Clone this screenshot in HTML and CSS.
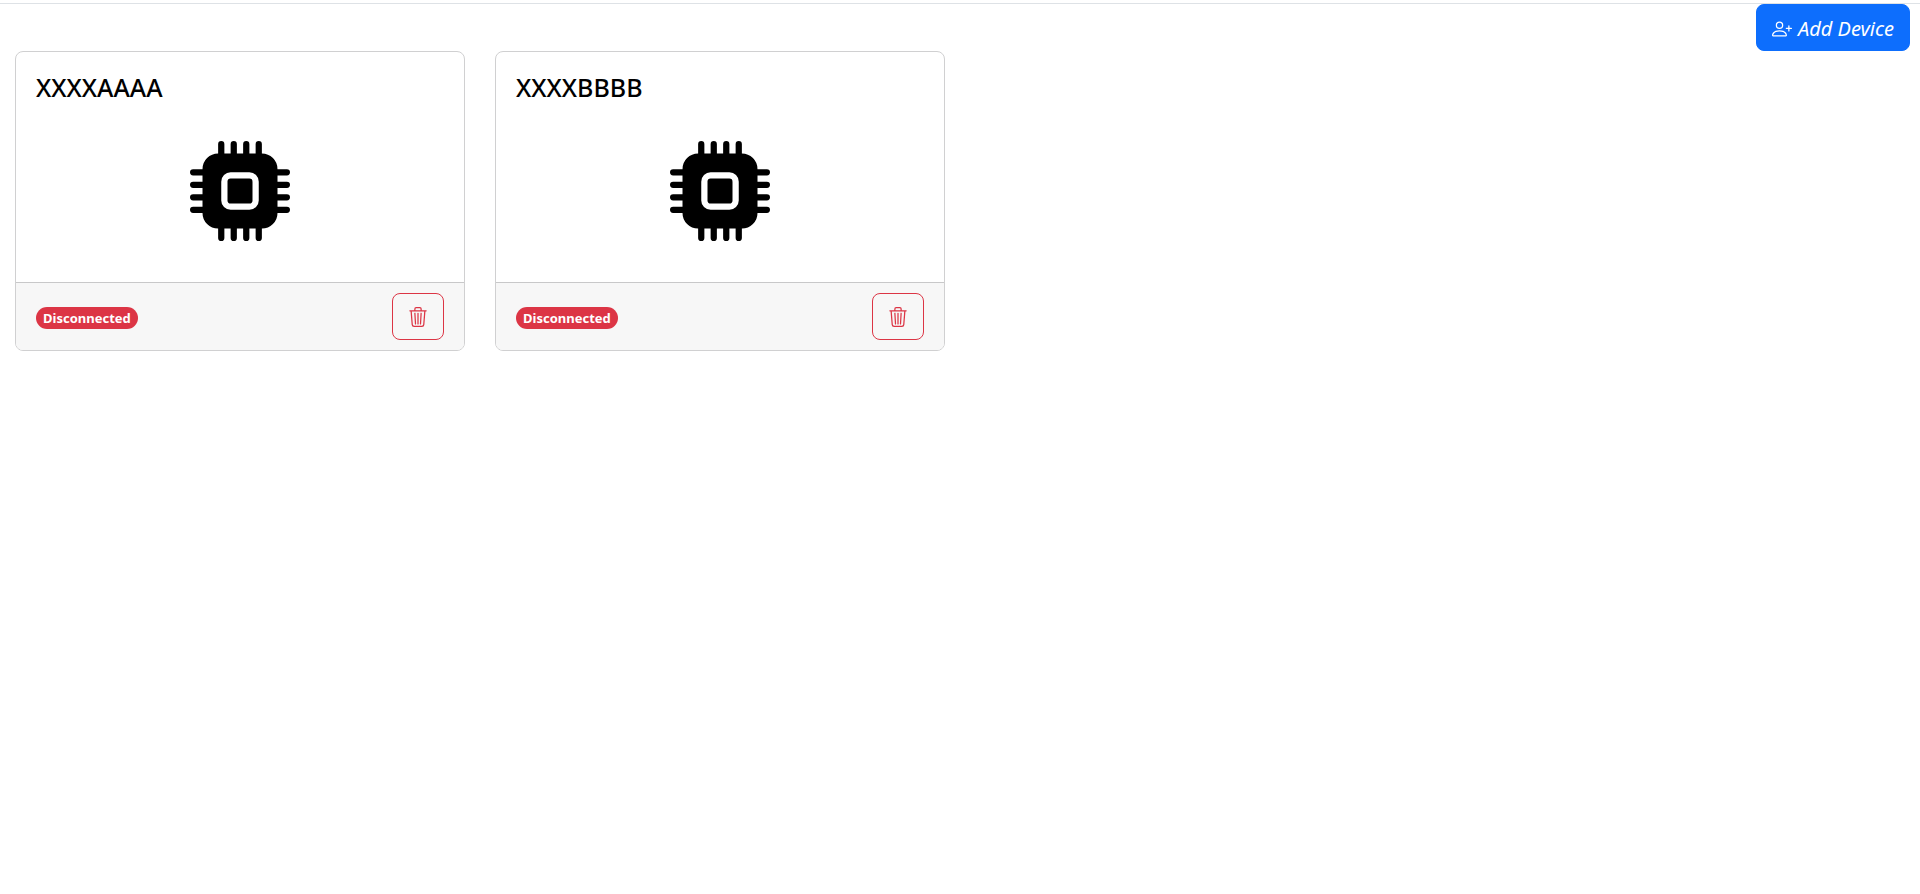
FILE: index.html
```html
<!DOCTYPE html>
<html lang="en">
<head>
<meta charset="utf-8">
<meta name="viewport" content="width=device-width, initial-scale=1">
<title>Devices</title>
<link rel="stylesheet" href="styles.css">
</head>
<body>
<svg class="sprite" aria-hidden="true">
  <symbol id="cpu" viewBox="0 0 16 16"><path d="M6.5 6a.5.5 0 0 0-.5.5v3a.5.5 0 0 0 .5.5h3a.5.5 0 0 0 .5-.5v-3a.5.5 0 0 0-.5-.5z"/><path d="M5.5.5a.5.5 0 0 0-1 0V2A2.5 2.5 0 0 0 2 4.500H.5a.5.5 0 0 0 0 1H2v1H.5a.5.5 0 0 0 0 1H2v1H.5a.5.5 0 0 0 0 1H2v1H.5a.5.5 0 0 0 0 1H2A2.500 2.500 0 0 0 4.500 14v1.500a.5.5 0 0 0 1 0V14h1v1.500a.5.5 0 0 0 1 0V14h1v1.500a.5.5 0 0 0 1 0V14h1v1.500a.5.5 0 0 0 1 0V14a2.500 2.500 0 0 0 2.500-2.500h1.500a.5.5 0 0 0 0-1H14v-1h1.500a.5.5 0 0 0 0-1H14v-1h1.500a.5.5 0 0 0 0-1H14v-1h1.500a.5.5 0 0 0 0-1H14A2.500 2.500 0 0 0 11.500 2V.5a.5.5 0 0 0-1 0V2h-1V.5a.5.5 0 0 0-1 0V2h-1V.5a.5.5 0 0 0-1 0V2h-1zm1 4.500h3A1.500 1.500 0 0 1 11 6.500v3A1.500 1.500 0 0 1 9.500 11h-3A1.500 1.500 0 0 1 5 9.500v-3A1.500 1.500 0 0 1 6.500 5"/></symbol>
  <symbol id="trash" viewBox="0 0 16 16"><path d="M6.5 1h3a.5.5 0 0 1 .5.5v1H6v-1a.5.5 0 0 1 .5-.5M11 2.500v-1A1.500 1.500 0 0 0 9.500 0h-3A1.500 1.500 0 0 0 5 1.500v1H1.500a.5.5 0 0 0 0 1h.538l.853 10.660A2 2 0 0 0 4.885 16h6.230a2 2 0 0 0 1.994-1.840l.853-10.660h.538a.5.5 0 0 0 0-1zm1.958 1-.846 10.580a1 1 0 0 1-.997.920h-6.230a1 1 0 0 1-.997-.920L3.042 3.500zm-7.487 1a.5.5 0 0 1 .528.470l.5 8.500a.5.5 0 0 1-.998.060L5 5.030a.5.5 0 0 1 .470-.530m5.058 0a.5.5 0 0 1 .470.530l-.5 8.500a.5.5 0 1 1-.998-.060l.5-8.500a.5.5 0 0 1 .528-.470M8 4.500a.5.5 0 0 1 .5.5v8.500a.5.5 0 0 1-1 0V5a.5.5 0 0 1 .5-.5"/></symbol>
  <symbol id="person-plus" viewBox="0 0 16 16"><path d="M6 8a3 3 0 1 0 0-6 3 3 0 0 0 0 6m2-3a2 2 0 1 1-4 0 2 2 0 0 1 4 0m4 8c0 1-1 1-1 1H1s-1 0-1-1 1-4 6-4 6 3 6 4m-1-.004c-.001-.246-.154-.986-.832-1.664C9.516 10.680 8.289 10 6 10s-3.516.680-4.168 1.332c-.678.678-.830 1.418-.832 1.664z"/><path d="M13.500 5a.5.5 0 0 1 .5.5V7h1.500a.5.5 0 0 1 0 1H14v1.500a.5.5 0 0 1-1 0V8h-1.500a.5.5 0 0 1 0-1H13V5.500a.5.5 0 0 1 .5-.5"/></symbol>
</svg>
<header class="toolbar">
  <button type="button" class="btn btn-primary"><svg class="icon" aria-hidden="true"><use href="#person-plus"/></svg>Add Device</button>
</header>
<main class="devices">
  <article class="card">
    <div class="card-body">
      <h2 class="card-title">XXXXAAAA</h2>
      <svg class="chip" aria-hidden="true"><use href="#cpu"/></svg>
    </div>
    <footer class="card-footer">
      <span class="badge">Disconnected</span>
      <button type="button" class="btn btn-danger" aria-label="Delete XXXXAAAA"><svg class="icon" aria-hidden="true"><use href="#trash"/></svg></button>
    </footer>
  </article>
  <article class="card">
    <div class="card-body">
      <h2 class="card-title">XXXXBBBB</h2>
      <svg class="chip" aria-hidden="true"><use href="#cpu"/></svg>
    </div>
    <footer class="card-footer">
      <span class="badge">Disconnected</span>
      <button type="button" class="btn btn-danger" aria-label="Delete XXXXBBBB"><svg class="icon" aria-hidden="true"><use href="#trash"/></svg></button>
    </footer>
  </article>
</main>
</body>
</html>
```
FILE: styles.css
```css
* { box-sizing: border-box; }

body {
  margin: 0;
  padding-top: 3px;
  background: #fff;
  color: #000;
  font-family: "Segoe UI", "Noto Sans", "Open Sans", sans-serif;
  font-size: 20px;
  line-height: 30px;
}

.sprite { display: none; }

.toolbar {
  display: flex;
  justify-content: flex-end;
  padding-right: 10px;
  border-top: 1px solid #dee2e6;
}

.btn {
  display: inline-flex;
  align-items: center;
  gap: 6px;
  height: 47px;
  padding: 0 15px;
  border: 1px solid transparent;
  border-radius: 8px;
  font: inherit;
  cursor: pointer;
}

.btn-primary {
  padding-top: 2px;
  background: #0d6efd;
  border-color: #0d6efd;
  color: #fff;
  font-style: italic;
}

.btn-danger {
  background: transparent;
  border-color: #dc3545;
  color: #dc3545;
}

.icon {
  width: 20px;
  height: 20px;
  fill: currentColor;
}

.devices {
  display: grid;
  grid-template-columns: repeat(4, 1fr);
  gap: 30px;
  padding: 0 15px;
}

.card {
  border: 1px solid #d0d0d1;
  border-radius: 8px;
  overflow: hidden;
}

.card-body {
  display: flex;
  flex-direction: column;
  gap: 39px;
  padding: 20px 20px 41px;
}

.card-title {
  margin: 0;
  font-size: 25px;
  font-weight: 500;
  line-height: 30px;
}

.chip {
  align-self: center;
  width: 100px;
  height: 100px;
}

.card-footer {
  display: flex;
  align-items: center;
  justify-content: space-between;
  padding: 10px 20px;
  border-top: 1px solid #c8c8c9;
  background: #f7f7f7;
}

.badge {
  margin-top: 2px;
  padding: 0 7px;
  border-radius: 11px;
  background: #dc3545;
  color: #fff;
  font-size: 13px;
  font-weight: 700;
  line-height: 22px;
}
```
